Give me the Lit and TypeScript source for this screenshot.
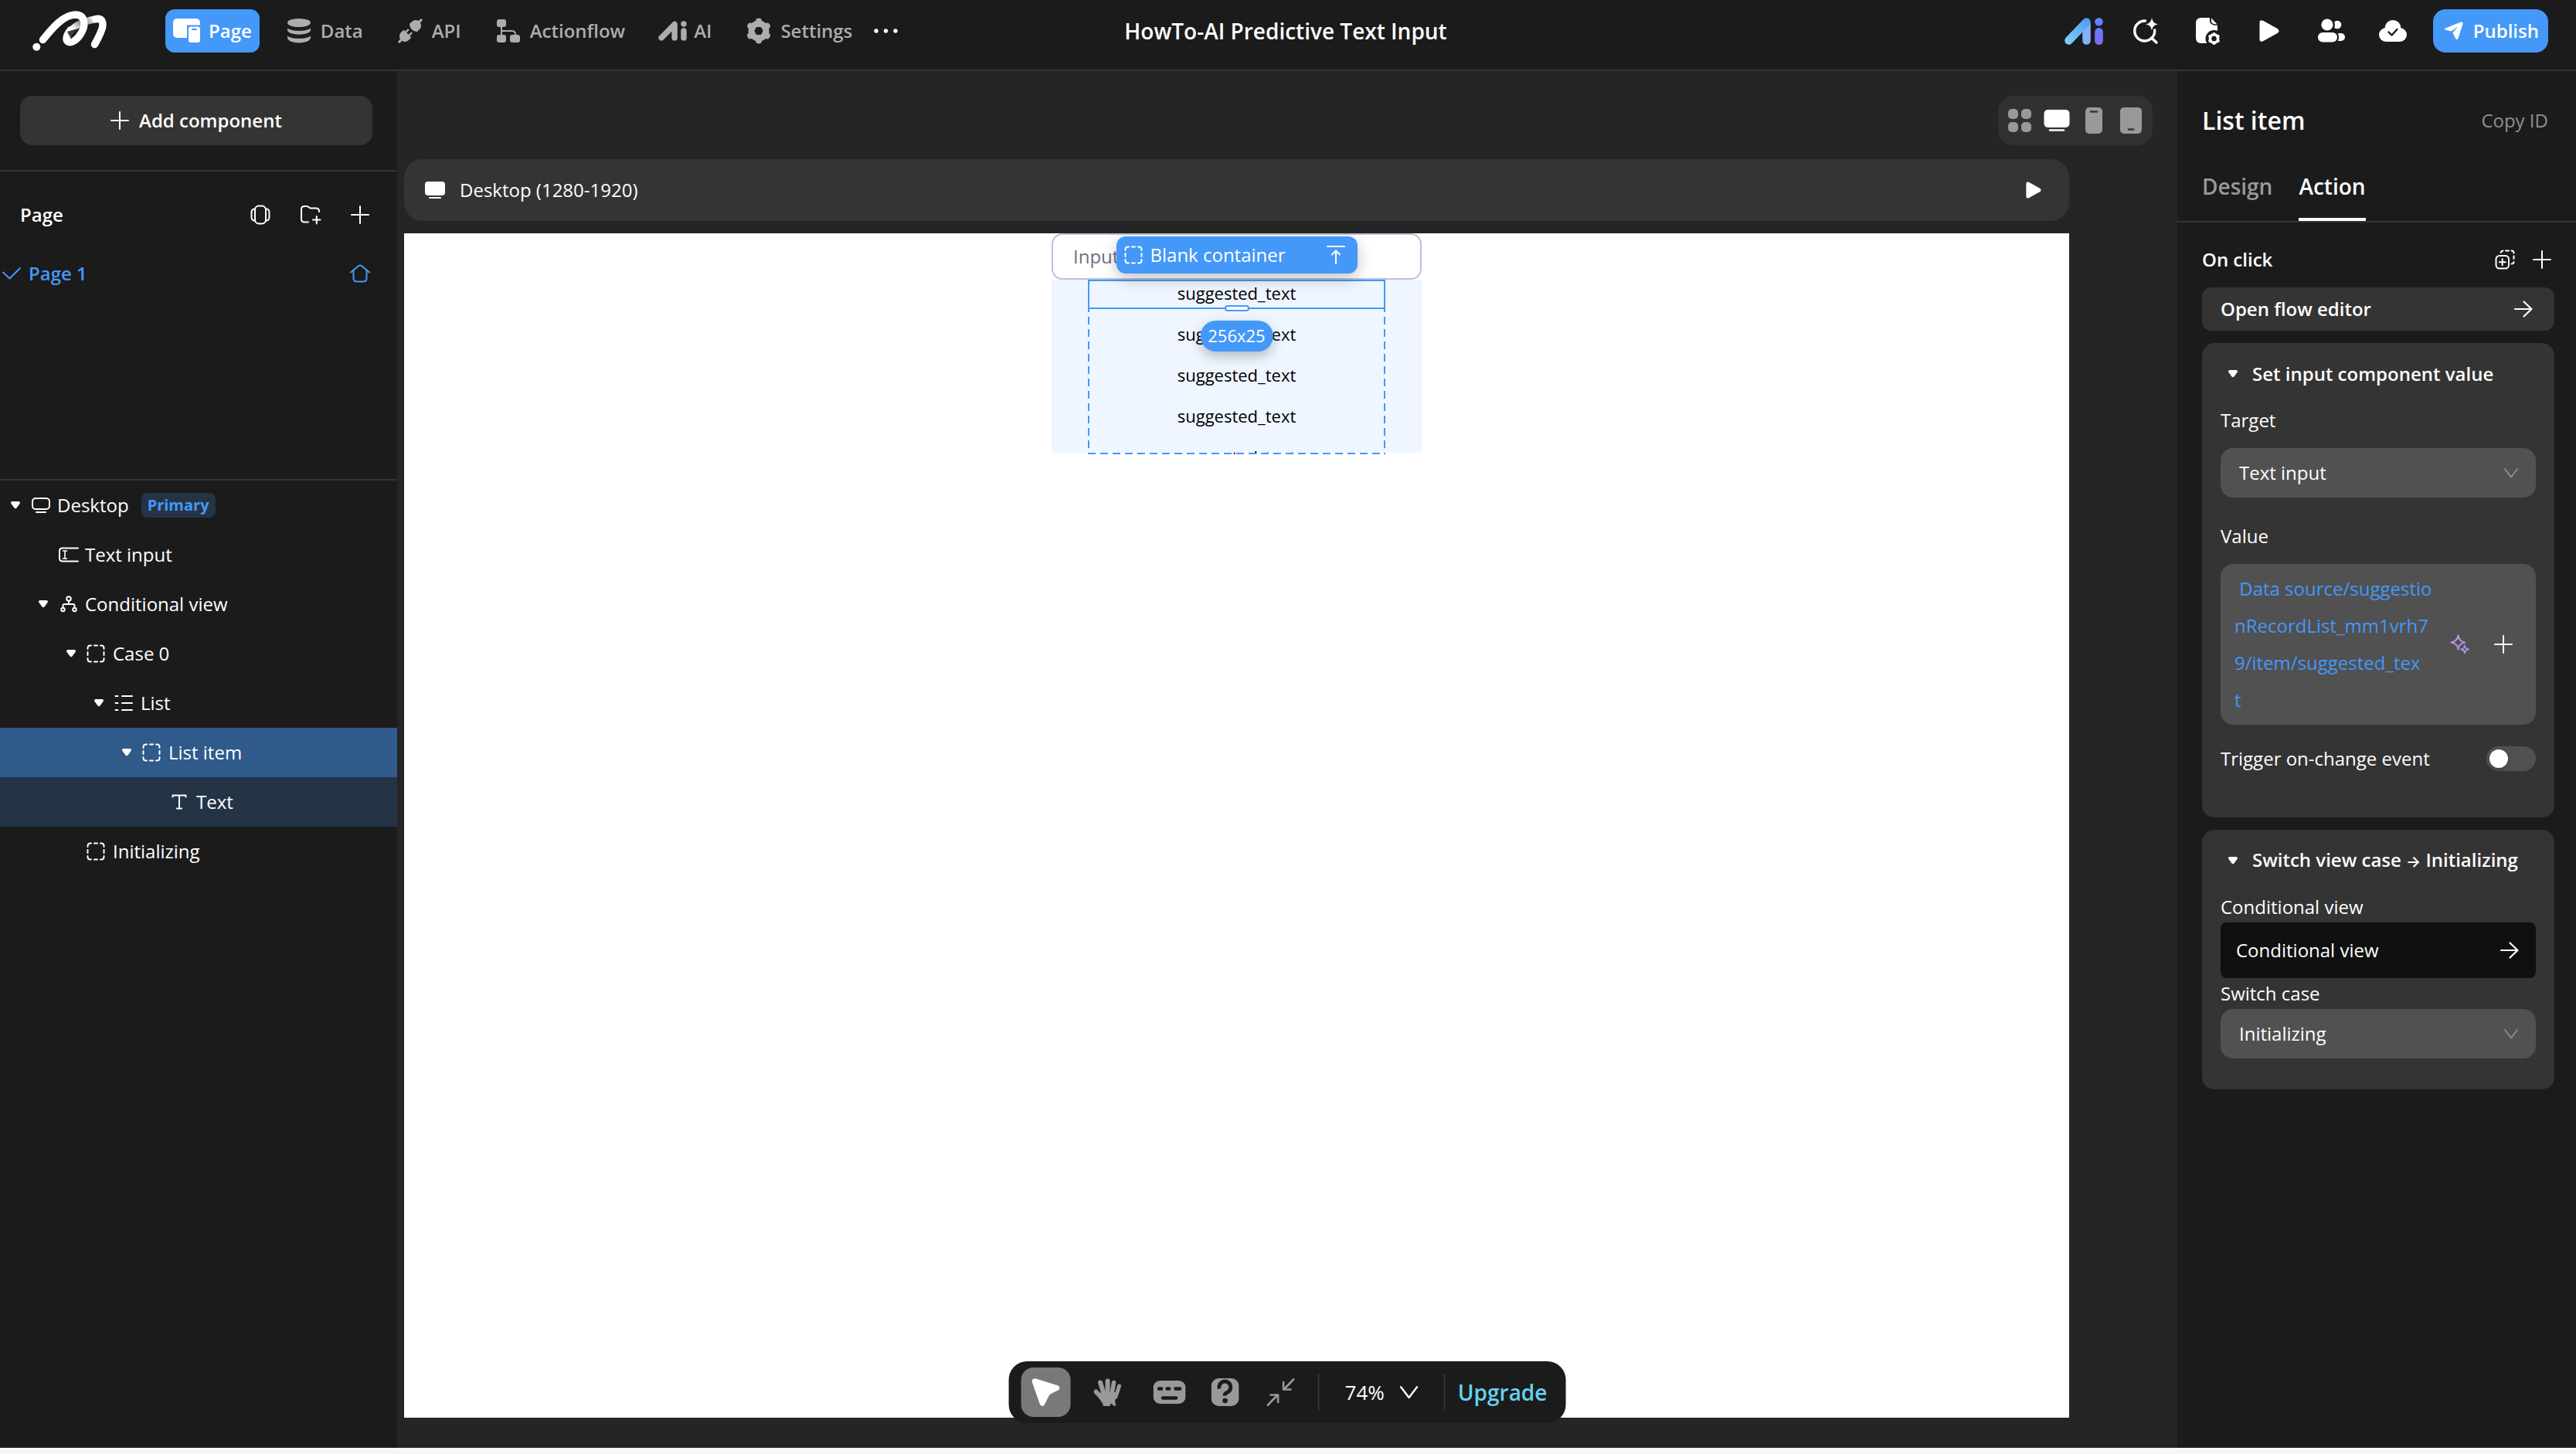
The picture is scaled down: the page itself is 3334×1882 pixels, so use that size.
import { LitElement, html, svg, css, nothing, TemplateResult, SVGTemplateResult } from 'lit';
import { customElement, state } from 'lit/decorators.js';
import { classMap } from 'lit/directives/class-map.js';
import { styleMap } from 'lit/directives/style-map.js';

const icon = (w: number, h: number, body: SVGTemplateResult): TemplateResult =>
  html`<svg width=${w} height=${h} viewBox="0 0 ${w} ${h}" fill="none" stroke-linecap="round" stroke-linejoin="round" aria-hidden="true">${body}</svg>`;

const gearTeeth = (cx: number, cy: number, r1: number, r2: number, w: number, color: string) =>
  [0, 60, 120, 180, 240, 300].map(
    (a) => svg`<line x1=${cx} y1=${cy - r1} x2=${cx} y2=${cy - r2} stroke=${color} stroke-width=${w} transform="rotate(${a} ${cx} ${cy})"/>`,
  );

const icons = {
  logo: () => icon(110, 66, svg`
    <defs>
      <linearGradient id="fold" x1="56" y1="46" x2="100" y2="14" gradientUnits="userSpaceOnUse">
        <stop offset="0" stop-color="#fff"/><stop offset=".34" stop-color="#eee"/><stop offset=".58" stop-color="#777"/><stop offset=".85" stop-color="#fff"/>
      </linearGradient>
    </defs>
    <circle cx="17.3" cy="53.7" r="5" fill="#fff"/>
    <path d="M57 43C60 29 74 21 95 17.5" stroke="url(#fold)" stroke-width="9"/>
    <path d="M94 17.6C104 16 104.500 25 101 33C99 39 95 46 92.500 50.500" stroke="#fff" stroke-width="9.500"/>
    <path d="M25.500 44.500C38 29 52 12.500 67 12C81 12 81 26 75 36C69 46 62 49 58 47C55 45 55 40 61 32" stroke="#fff" stroke-width="9.500"/>
    <path d="M57 34L62 43.500L73 29.500C69 31 62 32 57 34Z" fill="#1b1b1b" opacity=".85"/>`),
  page: () => icon(36, 32, svg`
    <rect width="35" height="25" rx="5" fill="#fff"/>
    <rect x="18" y="8.500" width="20" height="25" fill="#4498f8"/>
    <rect x="20" y="10.500" width="15" height="20.500" rx="3" fill="#fff"/>
    <rect x="24" y="13" width="7" height="2" rx="1" fill="#4498f8"/>`),
  data: () => icon(30, 32, svg`<g fill="currentColor">
    <ellipse cx="15" cy="5.500" rx="15" ry="5.500"/>
    <path d="M0 12.500C5 17 25 17 30 12.500V15C29 22.500 1 22.500 0 15Z"/>
    <path d="M0 22.500C5 27 25 27 30 22.500V25C29 33.500 1 33.500 0 25Z"/></g>`),
  api: () => icon(36, 36, svg`<g transform="rotate(45 18 18)" fill="currentColor" stroke="currentColor" stroke-width="2">
    <path d="M18 -2V3" stroke-width="3"/>
    <path d="M12 12V8a6 6 0 0 1 12 0V12Q18 17 12 12Z"/>
    <path d="M15 19V24M21 19V24" stroke-width="2.500"/>
    <path d="M12 24H24V28a6 6 0 0 1 -12 0Z"/>
    <path d="M18 33V38" stroke-width="3"/></g>`),
  flow: () => icon(30, 30, svg`
    <g fill="currentColor"><rect width="12" height="10" rx="3"/><rect y="20" width="12" height="10" rx="3"/><rect x="17" y="20" width="13" height="10" rx="3"/></g>
    <path d="M6 9V21M6 15H20Q24 15 24 20" stroke="currentColor" stroke-width="2"/>`),
  ai: () => html`<svg width="37" height="26" viewBox="0 0 50 35" fill="none" stroke="currentColor" stroke-width="10" stroke-linecap="round" stroke-linejoin="round" aria-hidden="true">
    <path d="M5.500 29.500L28.500 6V29.500M44.500 17.500V29.500M44.500 5.300V5.400"/></svg>`,
  settings: () => icon(34, 34, svg`${gearTeeth(17, 17, 9, 12.5, 8, 'currentColor')}<circle cx="17" cy="17" r="9.500" stroke="currentColor" stroke-width="8"/>`),
  dots: () => icon(32, 6, svg`<g fill="#fff"><circle cx="3" cy="3" r="2.700"/><circle cx="15.500" cy="3" r="2.700"/><circle cx="28" cy="3" r="2.700"/></g>`),
  aiColor: () => icon(50, 35, svg`
    <defs>
      <linearGradient id="aia" x1="0" y1="35" x2="33" y2="0" gradientUnits="userSpaceOnUse"><stop stop-color="#82d4f7"/><stop offset="1" stop-color="#4c97f8"/></linearGradient>
      <linearGradient id="aib" x1="0" y1="0" x2="0" y2="35" gradientUnits="userSpaceOnUse"><stop stop-color="#5b86fb"/><stop offset="1" stop-color="#7a6bf6"/></linearGradient>
    </defs>
    <path d="M28.500 8V29.500" stroke="#86b2fb" stroke-width="10.500"/>
    <path d="M5.500 29.500L28.500 5.500" stroke="url(#aia)" stroke-width="10.500"/>
    <rect x="39.200" width="10.600" height="10.600" rx="5.300" fill="url(#aib)"/>
    <rect x="39.200" y="13" width="10.600" height="22" rx="5.300" fill="url(#aib)"/>`),
  search: () => icon(34, 36, svg`
    <path d="M16.500 5A13 13 0 1 0 28.700 17M24.500 27L31 33" stroke="#fff" stroke-width="3.400"/>
    <path d="M25 1Q26 8.500 33 9.300Q26 10.300 25 17.500Q24 10.300 17 9.300Q24 8.500 25 1Z" fill="#fff"/>`),
  fileGear: () => icon(34, 36, svg`
    <path d="M9 1H20V6Q21 11 30 11V34H9Q2 34 2 27V8Q2 1 9 1Z" fill="#fff"/>
    <path d="M22 1.500L29.500 9.500Q23 9.500 22 6Z" fill="#fff"/>
    <circle cx="25.500" cy="28" r="11" fill="#1b1b1b"/>
    ${gearTeeth(25.5, 28, 5, 6.3, 3.6, '#fff')}<circle cx="25.500" cy="28" r="5.200" stroke="#fff" stroke-width="3.400"/>`),
  play: (s = 1) => html`<svg width=${Math.round(26 * s)} height=${Math.round(28 * s)} viewBox="0 0 26 28" aria-hidden="true">
    <path d="M0.500 3.500Q0.500 -1 5 0.800L23.500 11Q27.500 14 23.500 17L5 27.200Q0.500 29 0.500 24.500Z" fill="#fff"/></svg>`,
  users: () => icon(38, 32, svg`
    <circle cx="27" cy="8" r="5.300" fill="#fff"/><rect x="18" y="19" width="19" height="10" rx="5" fill="#fff"/>
    <circle cx="14" cy="8" r="10" fill="#1b1b1b"/><rect x="0" y="16" width="29" height="16" rx="7" fill="#1b1b1b"/>
    <circle cx="14" cy="8" r="7.600" fill="#fff"/><rect x="2" y="18" width="25" height="12.500" rx="6.200" fill="#fff"/>`),
  cloud: () => icon(38, 30, svg`
    <circle cx="19" cy="11.500" r="10.500" fill="#fff"/><rect x="1" y="11" width="36" height="18" rx="9" fill="#fff"/>
    <path d="M13.500 16.500L17.500 20.500L24.500 13" stroke="#1b1b1b" stroke-width="2.400"/>`),
  send: () => icon(26, 26, svg`<path d="M2 9.500L22 1.500Q25 1 24.500 4L18.500 22.500Q17 26 15 22.500L11.500 15.500L18 7.500L9.500 13.500L2.500 11.800Q0 10.500 2 9.500Z" fill="#fff"/>`),
  plus: () => icon(24, 24, svg`<path d="M12 1V23M1 12H23" stroke="#fff" stroke-width="2"/>`),
  carousel: () => icon(26, 26, svg`<rect x="6" y="1.500" width="14" height="23" rx="5" stroke="#fff" stroke-width="2"/>
    <path d="M5 5.500Q1.500 6 1.500 10V16Q1.500 20 5 20.500M21 5.500Q24.500 6 24.500 10V16Q24.500 20 21 20.500" stroke="#fff" stroke-width="2"/>`),
  folder: () => icon(28, 26, svg`<path d="M11 22.500H6Q2 22.500 2 18.500V6Q2 2 6 2H9Q11 2 12 3.300Q13 4.500 15 4.500H21Q25 4.500 25 8.500V9M17 19.500H26.500M21.800 15V24.500" stroke="#fff" stroke-width="2"/>`),
  check: () => icon(24, 16, svg`<path d="M1 6.500L9.500 14.500L23 1" stroke="#4498f8" stroke-width="2"/>`),
  home: () => icon(26, 24, svg`<path d="M1 10.500L10.500 2.500Q13 0.500 15.500 2.500L25 10.500M4.500 8V18Q4.500 22.500 9 22.500H17Q21.500 22.500 21.500 18V8" stroke="#4498f8" stroke-width="2"/>`),
  caret: (s = 1) => html`<svg width=${Math.round(12 * s)} height=${Math.round(10 * s)} viewBox="0 0 12 10" aria-hidden="true"><path d="M1.500 0H10.500Q12.800 0.800 11.500 3L7.500 8.500Q6 10 4.500 8.500L0.500 3Q-0.800 0.800 1.500 0Z" fill="#fff"/></svg>`,
  desktop: () => icon(26, 22, svg`<rect x="2" y="2" width="22" height="14" rx="4" stroke="#fff" stroke-width="2"/><path d="M7 20H19" stroke="#fff" stroke-width="2"/>`),
  textInput: () => icon(26, 20, svg`<path d="M25 1.500H5Q1 1.500 1 5V14.500Q1 18.500 5 18.500H25" stroke="#fff" stroke-width="2"/><path d="M5.500 5H10.500M5.500 15H10.500M8 5V15" stroke="#fff" stroke-width="1.600"/>`),
  cond: () => icon(24, 22, svg`<g stroke="#fff" stroke-width="2"><circle cx="13" cy="4" r="2.800"/><circle cx="5.500" cy="18" r="2.200"/><circle cx="20.500" cy="18" r="2.200"/><path d="M13 7V11M5.500 15V13Q5.500 11 7.500 11H18.500Q20.500 11 20.500 13V15"/></g>`),
  box: () => icon(24, 24, svg`<path d="M1.500 6V5Q1.500 1.500 5 1.500H6M10 1.500H14M18 1.500H19Q22.500 1.500 22.500 5V6M22.500 10V14M22.500 18V19Q22.500 22.500 19 22.500H18M14 22.500H10M6 22.500H5Q1.500 22.500 1.500 19V18M1.500 14V10" stroke="#fff" stroke-width="2"/>`),
  list: () => icon(24, 22, svg`<path d="M1.500 2H4.500M1.500 11H4.500M1.500 20H4.500M10 2H23M10 11H23M10 20H23" stroke="#fff" stroke-width="2"/>`),
  text: () => icon(22, 20, svg`<path d="M3.500 3.500V1.500H20.500V3.500M12 1.500V18.500M9 18.500H15" stroke="#fff" stroke-width="2"/>`),
  grid: (c: string) => icon(30, 30, svg`<g fill=${c}><rect width="13" height="13" rx="5"/><rect x="17" width="13" height="13" rx="5"/><rect y="17" width="13" height="13" rx="5"/><rect x="17" y="17" width="13" height="13" rx="5"/></g>`),
  monitor: (c: string) => icon(34, 30, svg`<rect x="0.500" y="1" width="33" height="23" rx="5" fill=${c}/><path d="M8 27.500H26" stroke=${c} stroke-width="2.500"/>`),
  monitorSmall: () => icon(28, 24, svg`<rect x="1" y="1" width="26" height="18" rx="4" fill="#fff"/><path d="M7 22H21" stroke="#fff" stroke-width="2"/>`),
  phone: (c: string) => icon(24, 34, svg`<rect x="1" width="22" height="34" rx="5" fill=${c}/><path d="M8 5.500H16" stroke="#343434" stroke-width="2.400"/>`),
  tablet: (c: string) => icon(28, 34, svg`<rect width="28" height="34" rx="5" fill=${c}/><path d="M11 28.500H17" stroke="#343434" stroke-width="2.400"/>`),
  toTop: () => icon(24, 26, svg`<path d="M1 2H23M12 24V8M7 12.500L12 7.500L17 12.500" stroke="#fff" stroke-width="2"/>`),
  copyAdd: () => icon(26, 26, svg`<g stroke="#fff" stroke-width="2"><rect x="1.500" y="8" width="16.500" height="16.500" rx="4.500"/><path d="M9.700 12.300V20.200M5.800 16.200H13.700M7.500 4Q8 2 10.500 1.500M14 1.500H18M21.500 1.500Q24.500 1.500 24.500 4.500M24.500 8.500V12M24.500 16Q24.500 18.500 21.500 18.500"/></g>`),
  arrow: () => icon(26, 24, svg`<path d="M2 12H23M13.500 2.500L23.500 12L13.500 21.500" stroke="#fff" stroke-width="2.200"/>`),
  chevron: (c: string, w = 18) => html`<svg class="chev" width=${w} height=${Math.round(w * 0.72)} viewBox="0 0 18 13" fill="none" aria-hidden="true"><path d="M1 1L9 11.500L17 1" stroke=${c} stroke-width="1.800" stroke-linecap="round" stroke-linejoin="round"/></svg>`,
  sparkle: () => icon(26, 26, svg`
    <defs><linearGradient id="spk" x1="0" y1="0" x2="26" y2="26" gradientUnits="userSpaceOnUse"><stop stop-color="#c6a8ee"/><stop offset=".45" stop-color="#b58be0"/><stop offset="1" stop-color="#8f97ea"/></linearGradient></defs>
    <path d="M10.500 1.500Q11.500 9 19 10.500Q11.500 12 10.500 19.500Q9.500 12 1.500 10.500Q9.500 9 10.500 1.500ZM19 14.500Q19.500 19 24 19.500Q19.500 20 19 24.500Q18.500 20 14 19.500Q18.500 19 19 14.500Z" stroke="url(#spk)" stroke-width="2"/>`),
  pointer: () => icon(36, 36, svg`<path d="M4.500 .300L34 9.500Q38 12.500 34 15.500L25.500 19.500Q22.500 21 21.500 23.500L16.500 34Q13.500 38 10.500 34L.300 5Q-.300 0 4.500 .300Z" fill="#fff"/>`),
  hand: () => icon(36, 36, svg`<g stroke="#999" stroke-width="6"><path d="M18 3.500V20"/><path d="M8.500 5.500L13 20"/><path d="M26 5.500L23.500 20" stroke-width="5.500"/><path d="M33 10L28.500 24" stroke-width="5"/><path d="M3 17.500L13 28" stroke-width="6"/></g>
    <path d="M9 18H30Q30.500 25 27.500 28.500Q28 32 28.500 36L26 35.500L22.500 32.500L20.500 36H12V33.500L7 26Z" fill="#999"/>`),
  keyboard: () => icon(42, 30, svg`<rect width="42" height="30" rx="9" fill="#999"/><path d="M7.500 10.500H10.500M18 10.500H20.500M29 10.500H34.500M12.500 22.500H29.500" stroke="#1b1b1b" stroke-width="4.600"/>`),
  help: () => icon(36, 36, svg`<rect width="36" height="36" rx="10" fill="#999"/><path d="M10.500 13.500A7.500 7.500 0 1 1 20.500 18.500Q17.500 19.500 17.500 22.500" stroke="#1b1b1b" stroke-width="5" stroke-linecap="butt"/><circle cx="18" cy="29" r="3.300" fill="#1b1b1b"/>`),
  shrink: () => icon(36, 36, svg`<path d="M35 1L22 14.500M21.500 5V14.500H31M1 35L14 21.500M5 21.500H14.500V31" stroke="#999" stroke-width="2.600"/>`),
};

interface TreeNode { label: string; level: number; glyph: () => TemplateResult; open?: boolean; badge?: string; mark?: 'selected' | 'child' }

@customElement('app-root')
export class AppRoot extends LitElement {
  @state() private trigger = false;
  @state() private tab = 'Action';

  private nav = [
    { label: 'Page', glyph: icons.page, active: true },
    { label: 'Data', glyph: icons.data },
    { label: 'API', glyph: icons.api },
    { label: 'Actionflow', glyph: icons.flow },
    { label: 'AI', glyph: icons.ai },
    { label: 'Settings', glyph: icons.settings },
  ];

  private tools = [
    { label: 'AI assistant', glyph: icons.aiColor },
    { label: 'Search', glyph: icons.search },
    { label: 'Page settings', glyph: icons.fileGear },
    { label: 'Preview', glyph: () => icons.play() },
    { label: 'Members', glyph: icons.users },
    { label: 'Saved', glyph: icons.cloud },
  ];

  private tree: TreeNode[] = [
    { label: 'Desktop', level: 0, glyph: icons.desktop, open: true, badge: 'Primary' },
    { label: 'Text input', level: 1, glyph: icons.textInput },
    { label: 'Conditional view', level: 1, glyph: icons.cond, open: true },
    { label: 'Case 0', level: 2, glyph: icons.box, open: true },
    { label: 'List', level: 3, glyph: icons.list, open: true },
    { label: 'List item', level: 4, glyph: icons.box, open: true, mark: 'selected' },
    { label: 'Text', level: 5, glyph: icons.text, mark: 'child' },
    { label: 'Initializing', level: 2, glyph: icons.box },
  ];

  static styles = css`
    :host {
      display: block;
      --bar: #1b1b1b;
      --stage: #252525;
      --card: #343434;
      --field: #515151;
      --blue: #4498f8;
      font: 400 24px/32px 'Open Sans', 'Noto Sans', sans-serif;
      color: #fff;
    }
    * { box-sizing: border-box; }
    button, input, select, textarea { font: inherit; color: inherit; border: 0; margin: 0; padding: 0; background: none; }
    button { cursor: pointer; display: flex; align-items: center; justify-content: center; text-align: left; }
    svg { display: block; flex: none; }
    h1, h2, h3, ul { margin: 0; padding: 0; font: inherit; list-style: none; }
    .app { min-height: 100vh; display: flex; flex-direction: column; background: var(--stage); border-bottom: 8px solid #f6f6f6; }

    .top { display: grid; grid-template-columns: 1fr auto 1fr; align-items: center; height: 92px; padding: 0 36px 10px 30px; background: var(--bar); border-bottom: 2px solid #343434; }
    .start { display: flex; align-items: center; }
    .logo { margin-right: 74px; }
    .nav { display: flex; align-items: center; gap: 23px; }
    .nav-item { height: 56px; gap: 10px; padding: 0 10px; border-radius: 12px; color: #adadad; font-weight: 600; }
    .nav-item.active { background: var(--blue); color: #fff; }
    .nav-icon { width: 36px; display: flex; justify-content: center; }
    .more { padding: 12px 0; margin-left: 18px; }
    .title { font-size: 28px; font-weight: 600; }
    .end { display: flex; align-items: center; justify-content: flex-end; }
    .tool { width: 80px; height: 56px; }
    .publish { height: 56px; gap: 12px; padding: 0 12px 0 14px; margin-left: 12px; border-radius: 16px; background: var(--blue); font-weight: 600; }

    .body { flex: 1; display: grid; grid-template-columns: 514px minmax(0, 1fr) 516px; }
    .side { background: var(--bar); }
    .add-wrap { padding: 32px; padding-left: 26px; border-bottom: 2px solid #343434; }
    .add { width: 100%; height: 64px; gap: 13px; border-radius: 16px; background: var(--card); font-weight: 600; }
    .pages { height: 400px; padding-top: 24px; border-bottom: 2px solid #343434; }
    .pages-head { display: flex; align-items: center; height: 64px; padding: 0 36px 0 26px; gap: 38px; }
    .pages-head h2 { flex: 1; font-weight: 600; }
    .page-row { width: 100%; height: 64px; margin-top: 12px; padding: 0 35px 0 3px; gap: 10px; color: var(--blue); font-weight: 600; }
    .page-row span { flex: 1; }
    .node { width: 100%; height: 64px; justify-content: flex-start; }
    .node.selected { background: #2f5a8a; }
    .node.child { background: #243445; }
    .caret { width: 40px; padding-left: 14px; }
    .glyph { width: 34px; }
    .badge { margin-left: 16px; padding: 0 8px; border-radius: 8px; background: #243445; color: var(--blue); font-size: 20px; font-weight: 700; }

    .stage { position: relative; display: flex; flex-direction: column; padding: 32px 32px 39px 9px; background: var(--stage); }
    .devices { align-self: flex-end; display: flex; padding: 0 4px; height: 64px; border-radius: 20px; background: #313131; }
    .device { width: 48px; height: 64px; }
    .bar { display: flex; align-items: center; height: 80px; margin: 18px 108px 16px 0; padding: 0 36px 0 26px; gap: 18px; border-radius: 24px; background: var(--card); }
    .bar span { flex: 1; }
    .board { position: relative; flex: 1; margin-right: 108px; background: #fff; display: flex; flex-direction: column; align-items: center; color: #000; }
    .field { width: 479px; height: 60px; padding: 0 26px 2px; border: 2px solid #bdbfd9; border-radius: 14px; background: #fff; color: #000; }
    .field::placeholder { color: #6b7280; opacity: 1; }
    .view { width: 479px; height: 226px; display: flex; justify-content: center; background: linear-gradient(#eff6ff, #eff6ff) 0 0 / 100% 224px no-repeat; }
    .suggest {
      position: relative; width: 385px; height: 226px; overflow: hidden; display: flex; flex-direction: column; gap: 15px; font-size: 22px;
    }
    .suggest::after {
      content: ''; position: absolute; inset: 0; pointer-events: none;
      background:
        repeating-linear-gradient(180deg, var(--blue) 0 10px, transparent 10px 16px) 0 0 / 2px 100% no-repeat,
        repeating-linear-gradient(180deg, var(--blue) 0 10px, transparent 10px 16px) 100% 0 / 2px 100% no-repeat,
        repeating-linear-gradient(90deg, var(--blue) 0 10px, transparent 10px 16px) 0 100% / 100% 2px no-repeat;
    }
    .item { flex: none; height: 38px; line-height: 34px; text-align: center; }
    .item.current { position: relative; box-shadow: inset 0 0 0 2px var(--blue); }
    .handle { position: absolute; left: 50%; bottom: -3px; width: 32px; height: 8px; transform: translateX(-50%); border: 2px solid var(--blue); border-radius: 4px; background: #fff; z-index: 1; }
    .size { position: absolute; top: 53px; left: 50%; transform: translateX(-50%); padding: 0 10px; height: 40px; line-height: 38px; border-radius: 20px; background: var(--blue); color: #fff; box-shadow: 0 6px 16px rgba(0, 0, 0, .25); z-index: 1; }
    .tip { position: absolute; top: 4px; left: 50%; width: 312px; height: 48px; transform: translateX(-50%); display: flex; align-items: center; padding: 0 16px 0 10px; gap: 10px; border-radius: 12px; background: var(--blue); color: #fff; box-shadow: 0 6px 20px rgba(0, 0, 0, .25); }
    .tip span { flex: 1; }

    .dock { position: absolute; bottom: 32px; left: 50%; transform: translateX(-50%); display: flex; align-items: center; height: 80px; padding: 0 24px 0 16px; border-radius: 24px; background: var(--bar); }
    .dock-btn { width: 64px; height: 64px; margin-right: 16px; border-radius: 16px; }
    .dock-btn.near { margin-right: 8px; }
    .dock-btn.on { background: #797979; }
    .sep { width: 2px; height: 48px; background: #343434; }
    .zoom { gap: 20px; padding: 0 33px; font-size: 26px; }
    .upgrade { margin-left: 16px; color: #66d1f2; font-size: 28px; font-weight: 600; text-decoration: none; }

    .props { background: var(--bar); padding-top: 32px; }
    .props-head { display: flex; align-items: center; justify-content: space-between; height: 64px; padding: 0 36px 0 32px; }
    .props-head h2 { font-size: 32px; font-weight: 600; }
    .copy { color: #8f8f8f; }
    .tabs { display: flex; gap: 34px; height: 100px; padding: 8px 32px 0; border-bottom: 2px solid #343434; }
    .tab { height: 90px; border: solid transparent; border-width: 4px 0; font-size: 28px; font-weight: 600; color: #999; }
    .tab.on { color: #fff; border-bottom-color: #fff; }
    .actions { display: flex; flex-direction: column; gap: 16px; padding: 24px 28px 24px 32px; }
    .event { display: flex; align-items: center; gap: 23px; height: 48px; margin-bottom: -4px; padding-right: 4px; }
    .event h3 { flex: 1; font-weight: 600; }
    .open { height: 56px; justify-content: space-between; padding: 0 27px 0 24px; border-radius: 12px; background: var(--card); font-weight: 600; }
    .card { display: flex; flex-direction: column; padding: 16px 24px 60px; border-radius: 16px; background: var(--card); }
    .card.compact { padding-bottom: 40px; }
    .card-head { height: 48px; margin-bottom: 20px; justify-content: flex-start; white-space: pre; font-weight: 600; }
    .card-caret { width: 41px; padding-left: 10px; }
    .to { font-family: 'Inter', sans-serif; font-size: 20px; }
    .group { display: flex; flex-direction: column; gap: 20px; margin-bottom: 34px; }
    .group.last { margin-bottom: 28px; }
    .group.tight { gap: 4px; margin-bottom: 4px; }
    .group.end-tight { gap: 4px; margin-bottom: 0; }
    .pick { display: grid; align-items: center; }
    .pick select { grid-area: 1 / 1; width: 100%; height: 64px; padding: 0 24px; appearance: none; border-radius: 16px; background: var(--field); }
    .pick .chev { grid-area: 1 / 1; justify-self: end; margin-right: 23px; pointer-events: none; }
    .value { display: flex; align-items: center; height: 208px; padding: 8px 30px 8px 18px; border-radius: 16px; background: var(--field); }
    .value textarea { width: 260px; height: 192px; margin-right: auto; line-height: 48px; resize: none; overflow: hidden; word-break: break-all; color: var(--blue); }
    .value .plus { margin-left: 31px; }
    .switch-row { display: flex; align-items: center; justify-content: space-between; height: 32px; }
    .switch { appearance: none; display: flex; align-items: center; width: 64px; height: 32px; padding: 0 4px; border-radius: 16px; background: var(--field); cursor: pointer; }
    .switch::before { content: ''; width: 24px; height: 24px; border-radius: 50%; background: #fff; box-shadow: 0 2px 4px rgba(0, 0, 0, .25); }
    .switch:checked { justify-content: flex-end; background: var(--blue); }
    .link { height: 72px; width: 100%; justify-content: space-between; padding: 0 21px 0 20px; border-radius: 8px; background: #101010; }
  `;

  private renderTop() {
    return html`<header class="top">
      <div class="start">
        <div class="logo">${icons.logo()}</div>
        <nav class="nav">
          ${this.nav.map((n) => html`<button class=${classMap({ 'nav-item': true, active: !!n.active })}><span class="nav-icon">${n.glyph()}</span>${n.label}</button>`)}
        </nav>
        <button class="more" aria-label="More">${icons.dots()}</button>
      </div>
      <h1 class="title">HowTo-AI Predictive Text Input</h1>
      <div class="end">
        ${this.tools.map((t) => html`<button class="tool" aria-label=${t.label}>${t.glyph()}</button>`)}
        <button class="publish">${icons.send()}Publish</button>
      </div>
    </header>`;
  }

  private renderNode(n: TreeNode) {
    return html`<li><button class=${classMap({ node: true, selected: n.mark === 'selected', child: n.mark === 'child' })} style=${styleMap({ paddingLeft: `${n.level * 36}px` })}>
      <span class="caret">${n.open ? icons.caret() : nothing}</span>
      <span class="glyph">${n.glyph()}</span>${n.label}${n.badge ? html`<span class="badge">${n.badge}</span>` : nothing}
    </button></li>`;
  }

  private renderLeft() {
    return html`<aside class="side">
      <div class="add-wrap"><button class="add">${icons.plus()}Add component</button></div>
      <section class="pages">
        <div class="pages-head">
          <h2>Page</h2>
          <button aria-label="Carousel">${icons.carousel()}</button>
          <button aria-label="New folder">${icons.folder()}</button>
          <button aria-label="New page">${icons.plus()}</button>
        </div>
        <button class="page-row">${icons.check()}<span>Page 1</span>${icons.home()}</button>
      </section>
      <ul>${this.tree.map((n) => this.renderNode(n))}</ul>
    </aside>`;
  }

  private renderStage() {
    const dim = '#999';
    return html`<main class="stage">
      <div class="devices">
        <button class="device" aria-label="All">${icons.grid(dim)}</button>
        <button class="device" aria-label="Desktop">${icons.monitor('#fff')}</button>
        <button class="device" aria-label="Phone">${icons.phone(dim)}</button>
        <button class="device" aria-label="Tablet">${icons.tablet(dim)}</button>
      </div>
      <div class="bar">${icons.monitorSmall()}<span>Desktop (1280-1920)</span><button aria-label="Play">${icons.play(0.78)}</button></div>
      <div class="board">
        <input class="field" placeholder="Input" aria-label="Text input" />
        <div class="view">
          <div class="suggest">
            ${[0, 1, 2, 3, 4].map((i) => html`<div class=${classMap({ item: true, current: i === 0 })}>suggested_text${i === 0 ? html`<span class="handle"></span>` : nothing}</div>`)}
            <div class="size">256x25</div>
          </div>
        </div>
        <div class="tip">${icons.box()}<span>Blank container</span>${icons.toTop()}</div>
      </div>
      <div class="dock">
        <button class="dock-btn on" aria-label="Select">${icons.pointer()}</button>
        <button class="dock-btn" aria-label="Pan">${icons.hand()}</button>
        <button class="dock-btn near" aria-label="Shortcuts">${icons.keyboard()}</button>
        <button class="dock-btn near" aria-label="Help">${icons.help()}</button>
        <button class="dock-btn" aria-label="Fit">${icons.shrink()}</button>
        <span class="sep"></span>
        <button class="zoom">74%${icons.chevron('#fff', 24)}</button>
        <span class="sep"></span>
        <a class="upgrade" href="#upgrade">Upgrade</a>
      </div>
    </main>`;
  }

  private renderRight() {
    return html`<aside class="props">
      <div class="props-head"><h2>List item</h2><button class="copy">Copy ID</button></div>
      <div class="tabs" role="tablist">
        ${['Design', 'Action'].map((t) => html`<button role="tab" class=${classMap({ tab: true, on: this.tab === t })} @click=${() => (this.tab = t)}>${t}</button>`)}
      </div>
      <div class="actions">
        <div class="event"><h3>On click</h3><button aria-label="Paste action">${icons.copyAdd()}</button><button aria-label="Add action">${icons.plus()}</button></div>
        <button class="open">Open flow editor${icons.arrow()}</button>
        <section class="card">
          <button class="card-head"><span class="card-caret">${icons.caret()}</span>Set input component value</button>
          <div class="group">
            <label for="target">Target</label>
            <div class="pick"><select id="target"><option>Text input</option></select>${icons.chevron('#8f8f8f')}</div>
          </div>
          <div class="group last">
            <label for="value">Value</label>
            <div class="value">
              <textarea id="value" spellcheck="false" .value=${' Data source/suggestionRecordList_mm1vrh79/item/suggested_tex\nt'}></textarea>
              <button aria-label="Generate">${icons.sparkle()}</button>
              <button class="plus" aria-label="Add value">${icons.plus()}</button>
            </div>
          </div>
          <div class="switch-row">
            <label for="trigger">Trigger on-change event</label>
            <input id="trigger" class="switch" type="checkbox" role="switch" .checked=${this.trigger} @change=${() => (this.trigger = !this.trigger)} />
          </div>
        </section>
        <section class="card compact">
          <button class="card-head"><span class="card-caret">${icons.caret()}</span><span>Switch view case <span class="to">→</span> Initializing</span></button>
          <div class="group tight">
            <label for="view">Conditional view</label>
            <button class="link" id="view">Conditional view${icons.arrow()}</button>
          </div>
          <div class="group end-tight">
            <label for="case">Switch case</label>
            <div class="pick"><select id="case"><option>Initializing</option></select>${icons.chevron('#8f8f8f')}</div>
          </div>
        </section>
      </div>
    </aside>`;
  }

  render() {
    return html`<div class="app">${this.renderTop()}<div class="body">${this.renderLeft()}${this.renderStage()}${this.renderRight()}</div></div>`;
  }
}
